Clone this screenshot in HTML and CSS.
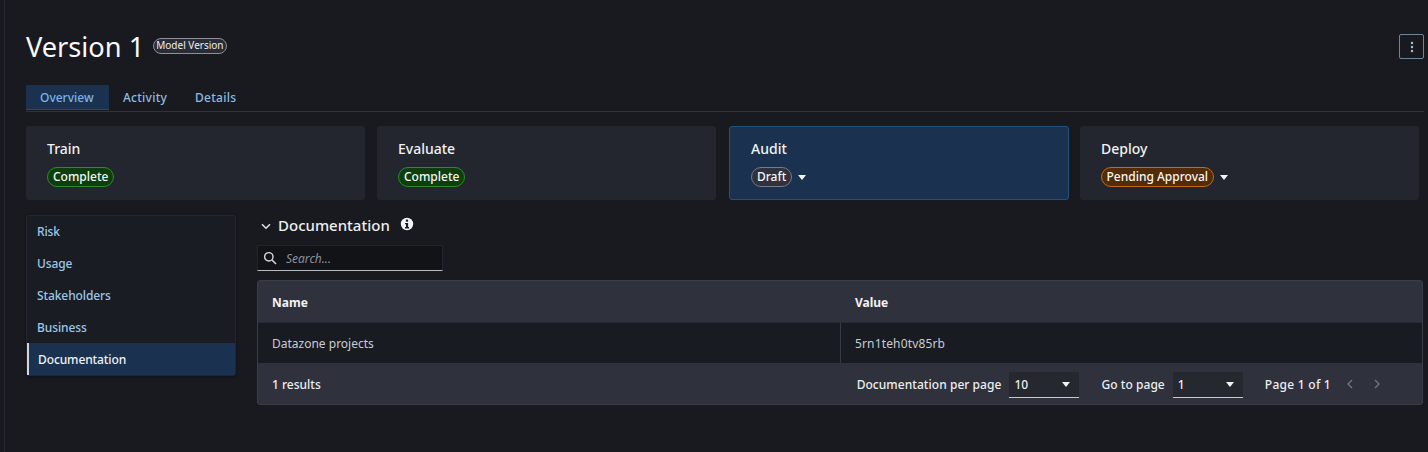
FILE: index.html
```html
<!DOCTYPE html>
<html lang="en">
<head>
<meta charset="utf-8">
<title>Version 1</title>
<link rel="stylesheet" href="styles.css">
</head>
<body>
<div class="rail"></div>
<main class="page">
  <header class="head">
    <div class="title-wrap">
      <h1 class="title">Version 1</h1>
      <span class="chip">Model Version</span>
    </div>
    <button class="more" aria-label="More">
      <svg width="4" height="12" viewBox="0 0 4 12"><circle cx="2" cy="2" r="1.2"/><circle cx="2" cy="6" r="1.2"/><circle cx="2" cy="10" r="1.2"/></svg>
    </button>
  </header>
  <nav class="tabs">
    <a class="tab tab-active">Overview</a>
    <a class="tab">Activity</a>
    <a class="tab">Details</a>
  </nav>
  <section class="stages">
    <div class="stage">
      <div class="stage-name">Train</div>
      <div class="stage-row"><span class="pill pill-green">Complete</span></div>
    </div>
    <div class="stage">
      <div class="stage-name">Evaluate</div>
      <div class="stage-row"><span class="pill pill-green">Complete</span></div>
    </div>
    <div class="stage stage-active">
      <div class="stage-name">Audit</div>
      <div class="stage-row"><span class="pill pill-grey">Draft</span><span class="caret"></span></div>
    </div>
    <div class="stage">
      <div class="stage-name">Deploy</div>
      <div class="stage-row"><span class="pill pill-orange">Pending Approval</span><span class="caret"></span></div>
    </div>
  </section>
  <section class="body-row">
    <aside class="side">
      <a class="side-item">Risk</a>
      <a class="side-item">Usage</a>
      <a class="side-item">Stakeholders</a>
      <a class="side-item">Business</a>
      <a class="side-item side-active">Documentation</a>
    </aside>
    <div class="content">
      <div class="doc-head">
        <svg class="chev" width="10" height="7" viewBox="0 0 10 7"><path d="M1 1.2 5 5.2 9 1.2" fill="none" stroke="#e4e5ea" stroke-width="1.5"/></svg>
        <h2 class="doc-title">Documentation</h2>
        <svg class="info" width="14" height="14" viewBox="0 0 14 14"><circle cx="7" cy="7" r="6.2" fill="#f2f3f5"/><rect x="5.9" y="2.6" width="2.2" height="2.1" fill="#181a21"/><path d="M5 6h3.1v4h1v1.4H5V10h1V7.3H5z" fill="#181a21"/></svg>
      </div>
      <div class="search">
        <svg width="14" height="14" viewBox="0 0 14 14"><circle cx="5.8" cy="5.8" r="4.2" fill="none" stroke="#d5d6db" stroke-width="1.4"/><path d="M9 9l4 4" stroke="#d5d6db" stroke-width="1.6"/></svg>
        <span class="search-text">Search...</span>
      </div>
      <div class="table">
        <div class="t-row t-head">
          <div class="cell cell-name">Name</div>
          <div class="cell">Value</div>
        </div>
        <div class="t-row t-data">
          <div class="cell cell-name">Datazone projects</div>
          <div class="cell cell-value">5rn1teh0tv85rb</div>
        </div>
        <div class="t-foot">
          <span>1 results</span>
          <div class="pager">
            <span class="pager-text">Documentation per page</span>
            <span class="select">10<span class="caret"></span></span>
            <span class="pager-text pager-label">Go to page</span>
            <span class="select">1<span class="caret"></span></span>
            <span class="pager-label pager-count">Page 1 of 1</span>
            <svg class="arrow" width="8" height="10" viewBox="0 0 8 10"><path d="M6 1 2 5l4 4" fill="none" stroke="#71747e" stroke-width="1.4"/></svg>
            <svg class="arrow arrow-next" width="8" height="10" viewBox="0 0 8 10"><path d="M2 1l4 4-4 4" fill="none" stroke="#71747e" stroke-width="1.4"/></svg>
          </div>
        </div>
      </div>
    </div>
  </section>
</main>
</body>
</html>
```
FILE: styles.css
```css
* { box-sizing: border-box; }
html, body { margin: 0; height: 100%; }
body {
  background: #181a20;
  color: #f2f3f5;
  font-family: "Noto Sans", "Open Sans", sans-serif;
  font-size: 12px;
  overflow: hidden;
  display: flex;
}
.rail { width: 5px; flex: none; border-right: 1px solid #262933; }
.page { flex: 1; padding: 28px 4px 0 21px; min-width: 0; }
.head { display: flex; justify-content: space-between; align-items: flex-start; height: 57px; }
.title-wrap { display: flex; align-items: center; height: 38px; gap: 9px; }
.title { margin: 0; font-size: 27.2px; font-weight: 400; line-height: 38px; color: #f8f9fa; }
.chip {
  border: 1px solid #8d8f99;
  border-radius: 8px;
  background: #2a2c35;
  font-size: 10px;
  line-height: 13px;
  padding: 0 2px;
  height: 16px;
  margin-top: -2px;
  color: #eceef1;
}
.more {
  width: 25px; height: 25px; margin: 6px 0 0 0; padding: 0;
  background: transparent;
  border: 1px solid #6f8598;
  border-radius: 2px;
  display: flex; align-items: center; justify-content: center;
}
.more svg { fill: #9fc3de; }
.tabs { display: flex; border-bottom: 1px solid #30333c; height: 27px; }
.tab { padding: 0 14px; height: 25px; line-height: 25px; font-size: 12px; font-weight: 500; color: #8ebce0; letter-spacing: .25px; }
.tab-active { width: 83px; background: #1a3150; border-bottom: 1px solid #1f4a7a; color: #7ab4e6; letter-spacing: 0; }
.stages { display: grid; grid-template-columns: 339px 339px 340px 339px; gap: 12px; margin-top: 14px; }
.stage {
  height: 74px;
  background: #23262e;
  border-radius: 3px;
  padding: 13px 21px 0;
}
.stage-active { background: #1a3150; border: 1px solid #24507c; padding: 12px 21px 0; margin: 0 -1px 0 1px; }
.stage-name { font-size: 14px; line-height: 19px; font-weight: 500; color: #f0f1f4; }
.stage-row { display: flex; align-items: center; gap: 6px; margin-top: 9px; }
.pill { border: 1px solid; border-radius: 10px; height: 20px; line-height: 17px; padding: 0 5px; font-size: 12px; font-weight: 500; color: #f5f6f8; }
.pill-green { background: #0d3f0c; border-color: #2f8a2d; }
.pill-grey { background: #2f323c; border-color: #777a85; }
.pill-orange { background: #532c07; border-color: #c26a16; padding: 0 4.5px; }
.caret { width: 0; height: 0; border-left: 4px solid transparent; border-right: 4px solid transparent; border-top: 5px solid #f2f3f5; }
.body-row { display: flex; gap: 21px; margin-top: 15px; align-items: flex-start; }
.side {
  width: 210px; flex: none;
  background: #1a1c24;
  border: 1px solid #23262f;
  border-radius: 3px;
  box-shadow: 0 1px 3px #0006;
  display: flex; flex-direction: column;
}
.side-item { height: 32px; line-height: 32px; padding-left: 10px; font-size: 12px; font-weight: 500; color: #9cc8e8; letter-spacing: -.1px; }
.side-active { background: #1a3150; color: #f0f1f4; border-left: 2px solid #d5d6db; padding-left: 9px; margin-top: -1px; line-height: 34px; }
.content { flex: 1; min-width: 0; padding-right: 1px; }
.doc-head { display: flex; align-items: center; height: 22px; padding-left: 4px; }
.chev { margin-right: 7px; }
.doc-title { margin: -2px 0 0; font-size: 15px; font-weight: 500; line-height: 22px; color: #eceef1; }
.info { margin-left: 10px; margin-top: -4px; }
.search {
  width: 186px; height: 26px; margin-top: 8px;
  background: #111317;
  border: 1px solid #22252d;
  border-bottom-color: #b9bbc2;
  display: flex; align-items: center; padding-left: 5px; gap: 9px;
}
.search-text { font-size: 12px; font-style: italic; color: #8d8f99; }
.table { margin-top: 9px; border: 1px solid #3a3d48; border-radius: 3px; background: #2f323d; }
.t-row { display: grid; grid-template-columns: 583px 1fr; }
.t-head { height: 42px; align-items: center; font-weight: 700; border-bottom: 1px solid #272a33; color: #f2f3f5; padding-top: 1px; }
.t-data { height: 40px; background: #191b22; color: #c9cbd1; align-items: stretch; }
.t-data .cell { display: flex; align-items: center; }
.cell { padding-left: 14px; }
.cell-value { border-left: 1px solid #383b45; margin-left: -1px; padding-left: 14px; letter-spacing: .15px; }
.t-foot { height: 41px; display: flex; align-items: center; justify-content: space-between; padding: 1px 41px 0 14px; font-weight: 500; color: #eceef1; }
.pager { display: flex; align-items: center; }
.pager-text { letter-spacing: .05px; }
.pager-count { letter-spacing: .27px; }
.select {
  width: 70px; height: 26px; margin: 1px 0 0 8px;
  background: #26282f;
  border-bottom: 1px solid #c9cbd1;
  display: flex; align-items: center; justify-content: space-between;
  padding: 0 9px 0 5px;
  font-size: 12px;
}
.pager-label { margin-left: 22px; }
.arrow { margin-left: 15px; }
.arrow-next { margin-left: 19px; }
```
